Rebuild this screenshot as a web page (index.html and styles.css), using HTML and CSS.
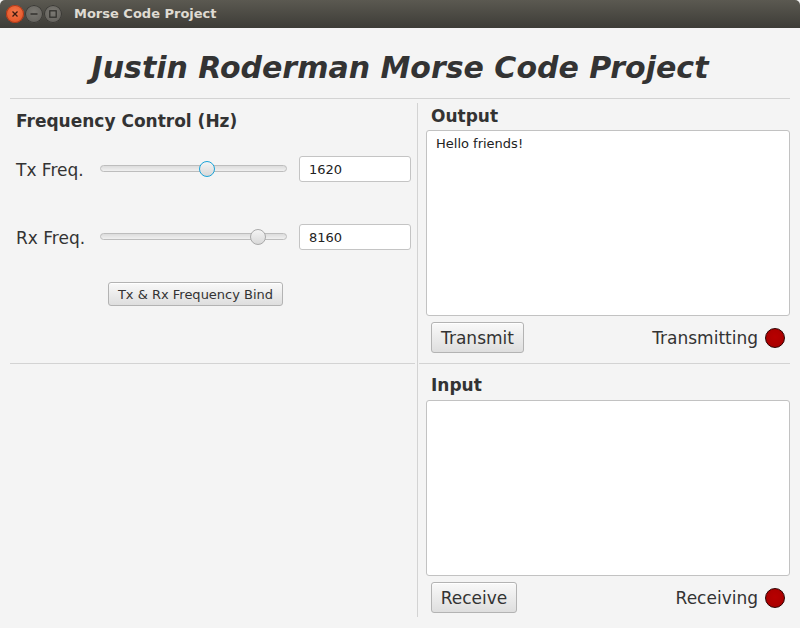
FILE: index.html
```html
<!DOCTYPE html>
<html>
<head>
<meta charset="utf-8">
<title>Morse Code Project</title>
<link rel="stylesheet" href="styles.css">
</head>
<body>
<div class="titlebar">
  <div class="winbtns">
    <span class="wb close"><svg width="18" height="18" viewBox="0 0 18 18"><path d="M6.5 6.5 L11.5 11.5 M11.5 6.5 L6.5 11.5" stroke="#3a1a10" stroke-width="1.3" fill="none"/></svg></span>
    <span class="wb"><svg width="18" height="18" viewBox="0 0 18 18"><path d="M5.5 9 H12.5" stroke="#2e2d2a" stroke-width="1.4" fill="none"/></svg></span>
    <span class="wb"><svg width="18" height="18" viewBox="0 0 18 18"><rect x="5.8" y="5.8" width="6.4" height="6.4" stroke="#2e2d2a" stroke-width="1.2" fill="none"/></svg></span>
  </div>
  <div class="wintitle">Morse Code Project</div>
</div>
<div class="window">
  <div class="header"><h1>Justin Roderman Morse Code Project</h1></div>
  <div class="hsep top"></div>
  <div class="main">
    <div class="col left">
      <div class="section ltop">
        <div class="label-bold freq-title">Frequency Control (Hz)</div>
        <div class="frow first">
          <span class="flabel">Tx Freq.</span>
          <div class="slider"><div class="track"></div><div class="thumb focused" style="left:99px"></div></div>
          <div class="field">1620</div>
        </div>
        <div class="frow second">
          <span class="flabel">Rx Freq.</span>
          <div class="slider"><div class="track"></div><div class="thumb" style="left:150px"></div></div>
          <div class="field">8160</div>
        </div>
        <button class="btn small bind">Tx &amp; Rx Frequency Bind</button>
      </div>
      <div class="hsep"></div>
    </div>
    <div class="vsep"></div>
    <div class="col right">
      <div class="section rtop">
        <div class="label-bold out-title">Output</div>
        <div class="textarea out">Hello friends!</div>
        <div class="actions">
          <button class="btn big transmit">Transmit</button>
          <div class="status"><span>Transmitting</span><span class="led"></span></div>
        </div>
      </div>
      <div class="hsep rsep"></div>
      <div class="section rbot">
        <div class="label-bold in-title">Input</div>
        <div class="textarea in"></div>
        <div class="actions">
          <button class="btn big receive">Receive</button>
          <div class="status"><span>Receiving</span><span class="led"></span></div>
        </div>
      </div>
    </div>
  </div>
</div>
</body>
</html>
```
FILE: styles.css
```css
* { box-sizing: border-box; }
html, body { margin: 0; padding: 0; }
body {
  width: 800px;
  height: 628px;
  overflow: hidden;
  background: #f4f4f4;
  font-family: "DejaVu Sans", "Liberation Sans", sans-serif;
  color: #333333;
}
.titlebar {
  height: 28px;
  display: flex;
  align-items: center;
  padding-left: 6px;
  background: linear-gradient(#5b5951, #3d3c37);
  border-radius: 5px 5px 0 0;
}
.winbtns { display: flex; gap: 1px; }
.wb {
  width: 18px;
  height: 18px;
  border-radius: 50%;
  background: radial-gradient(circle at 50% 40%, #7b7973, #5d5b56);
  box-shadow: inset 0 0 0 1px #3a3935;
  display: block;
}
.wb svg { display: block; }
.wb.close {
  background: radial-gradient(circle at 50% 40%, #f2784b, #df4a1c);
  box-shadow: inset 0 0 0 1px #a8381a;
}
.wintitle {
  margin-left: 12px;
  font-weight: bold;
  font-size: 13px;
  color: #dfdbd2;
  line-height: 28px;
}
.window { height: 600px; }
.header { height: 70px; padding-top: 22px; }
.header h1 {
  margin: 0;
  font-size: 30px;
  line-height: 35px;
  font-weight: bold;
  font-style: italic;
  text-align: center;
  color: #333333;
}
.hsep { height: 1px; background: #d3d3d3; }
.hsep.top { margin: 0 10px; }
.main { display: flex; margin: 0 10px; height: 520px; }
.col { display: flex; flex-direction: column; }
.left { width: 405px; }
.vsep { width: 1px; margin-left: 2px; margin-top: 4px; height: 514px; background: #d3d3d3; }
.right { width: 372px; }
.rsep { margin-left: 1px; }
.section { display: flex; flex-direction: column; align-items: flex-start; }
.ltop, .rtop { height: 264px; }
.label-bold { font-weight: bold; font-size: 17px; line-height: 20px; }
.freq-title { margin: 12px 0 0 6px; }
.frow { display: flex; align-items: center; height: 26px; padding-left: 6px; }
.frow.first { margin-top: 25px; }
.frow.second { margin-top: 42px; }
.flabel { width: 84px; font-size: 17px; line-height: 26px; padding-top: 1px; }
.slider { position: relative; width: 187px; height: 26px; }
.track {
  position: absolute; left: 0; right: 0; top: 9px; height: 7px;
  border-radius: 4px;
  border: 1px solid #bdbdbd;
  background: linear-gradient(#dcdcdc, #f0f0f0);
}
.thumb {
  position: absolute; top: 5px; width: 16px; height: 16px; border-radius: 50%;
  background: linear-gradient(#f4f4f4, #d9d9d9);
  border: 1px solid #a9a9a9;
}
.thumb.focused { border: 1.5px solid #1aa3d8; }
.field {
  margin-left: 12px;
  width: 112px; height: 26px;
  border: 1px solid #c4c4c4;
  border-radius: 3px;
  background: #ffffff;
  font-size: 13px;
  line-height: 22px;
  padding: 2px 0 0 9px;
  color: #222;
}
.btn {
  font-family: "DejaVu Sans", "Liberation Sans", sans-serif;
  color: #333333;
  border: 1px solid #b3b3b3;
  border-radius: 3px;
  background: linear-gradient(#f9f9f9, #dedede);
  box-shadow: inset 0 1px 0 #ffffff;
  padding: 1px 0 0 0;
  margin: 0;
}
.btn.small { font-size: 13px; height: 24px; line-height: 21px; }
.bind { margin: 32px 0 0 98px; width: 175px; }
.btn.big { font-size: 17px; height: 31px; line-height: 28px; }
.transmit { width: 93px; }
.receive { width: 86px; }
.out-title { margin: 7px 0 0 13px; }
.in-title { margin: 11px 0 0 13px; }
.textarea {
  margin-left: 8px;
  width: 364px;
  background: #ffffff;
  border: 1px solid #c2c2c2;
  border-radius: 3px;
  font-size: 13px;
  line-height: 15px;
  padding: 5px 9px;
  color: #222;
}
.textarea.out { margin-top: 4px; height: 186px; }
.textarea.in { margin-top: 5px; height: 176px; }
.actions {
  margin-top: 6px;
  width: 100%;
  display: flex;
  align-items: center;
  justify-content: space-between;
  padding: 0 5px 0 13px;
}
.status { display: flex; align-items: center; gap: 7px; font-size: 17px; }
.led {
  width: 20px; height: 20px; border-radius: 50%;
  background: radial-gradient(circle at 50% 45%, #b80000, #a40000);
  border: 1.5px solid #2e0000;
}
```
